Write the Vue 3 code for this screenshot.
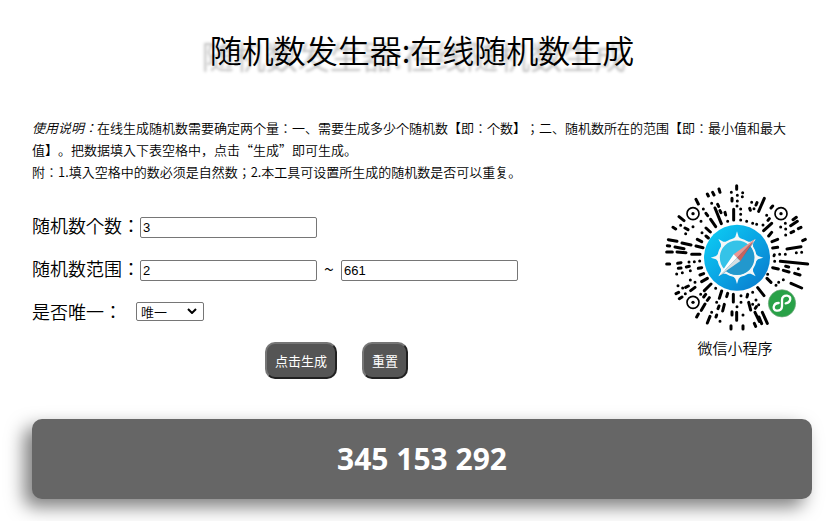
<script setup>
import { ref } from 'vue'

const defaults = { count: '3', min: '2', max: '661', unique: 'yes' }
const count = ref(defaults.count)
const min = ref(defaults.min)
const max = ref(defaults.max)
const unique = ref(defaults.unique)
const numbers = ref([345, 153, 292])

// Each entry is one quadrant of the code: x1, y1, x2, y2 for a dash, x, y for a dot.
const quadrants = [
  {
    x: 15, y: 15,
    marks: [
      [108, 58, 115, 72], [142, 42, 145, 48], [158, 37, 162, 45], [177, 27, 180, 37], [214, 37],
      [216, 55, 216, 63], [221, 88, 221, 120], [155, 70], [173, 73, 176, 79], [165, 84, 184, 131],
      [180, 92, 183, 98], [195, 97, 197, 105], [203, 124], [130, 87], [138, 100, 143, 107],
      [152, 118, 167, 140], [123, 124], [57, 110, 72, 122], [62, 136], [39, 142, 47, 147],
      [75, 144, 84, 149], [99, 140], [77, 161], [126, 158], [138, 144, 151, 156], [138, 168, 145, 174],
      [112, 178, 125, 185], [25, 179, 51, 184], [66, 189, 93, 195], [22, 197, 29, 198],
      [45, 201, 72, 206], [108, 198, 129, 203], [20, 216, 37, 216], [51, 216, 78, 218], [95, 223, 120, 223]
    ]
  },
  {
    x: 240, y: 15,
    marks: [
      [5, 17, 5, 28], [23, 38], [7, 46], [22, 50], [7, 63], [6, 78], [17, 87], [17, 103], [17, 120],
      [50, 67], [44, 85, 46, 91], [66, 68, 63, 75], [57, 86], [88, 55, 71, 94], [113, 78, 108, 84],
      [95, 106], [103, 116, 99, 121], [35, 124], [53, 130], [65, 133], [110, 130, 86, 152],
      [84, 135], [110, 157, 101, 168], [111, 185, 128, 178], [113, 204, 128, 202], [118, 224],
      [134, 223], [151, 223], [151, 130], [137, 141], [152, 147], [152, 165], [184, 112, 174, 119],
      [187, 124, 167, 137], [168, 158, 176, 154], [190, 146, 198, 142], [203, 182, 211, 178],
      [156, 207, 198, 200], [184, 218], [200, 217]
    ]
  },
  {
    x: 15, y: 240,
    marks: [
      [20, 27, 29, 27], [53, 25, 63, 23], [87, 21], [103, 20], [119, 18], [55, 40, 63, 39],
      [79, 36, 88, 34], [91, 47], [50, 57], [67, 53], [115, 40, 125, 38], [120, 60, 131, 56],
      [91, 75], [105, 82], [125, 80, 142, 70], [54, 92], [68, 99], [77, 97, 85, 93], [92, 107, 105, 97],
      [48, 116, 56, 112], [76, 116], [58, 131, 66, 126], [133, 107, 153, 87], [167, 100], [122, 118],
      [137, 118, 131, 126], [148, 128, 142, 136], [185, 108, 178, 130], [203, 115, 200, 125],
      [220, 118, 220, 141], [170, 142], [135, 147, 124, 166], [193, 148, 188, 168], [177, 153, 174, 161],
      [155, 172], [170, 180, 168, 186], [216, 170, 216, 180], [115, 177, 110, 186], [150, 184, 142, 204],
      [180, 199], [213, 212, 213, 222]
    ]
  },
  {
    x: 240, y: 240,
    marks: [
      [117, 2], [119, 19], [136, 19, 218, 27], [113, 38, 130, 42], [152, 34, 161, 36], [190, 41],
      [145, 46, 162, 51], [179, 55, 195, 60], [98, 58], [96, 70, 108, 82], [145, 74], [131, 82],
      [123, 91], [168, 85, 200, 99], [68, 98, 87, 122], [53, 112], [18, 122], [38, 118, 36, 126],
      [18, 142], [41, 142, 47, 165], [53, 148], [63, 135], [71, 149], [6, 155], [5, 172, 5, 196],
      [64, 155, 61, 160], [60, 172, 73, 199], [82, 172, 97, 205], [24, 180], [72, 186, 80, 206],
      [58, 205, 62, 214], [24, 212, 24, 222]
    ]
  }
]

const marksPath = quadrants
  .flatMap(q => q.marks.map(([x1, y1, x2 = x1, y2 = y1]) =>
    `M${q.x + x1} ${q.y + y1}L${q.x + x2} ${q.y + y2}`))
  .join('')

const rings = [[114, 116], [378, 116], [114, 382]]
const spikes = [0, 45, 90, 135, 180, 225, 270, 315]

function generate() {
  const low = Number(min.value)
  const high = Number(max.value)
  const total = Number(count.value)
  const onlyUnique = unique.value === 'yes'
  if (!(total > 0) || high < low || (onlyUnique && high - low + 1 < total)) return
  const result = []
  while (result.length < total) {
    const n = low + Math.floor(Math.random() * (high - low + 1))
    if (!onlyUnique || !result.includes(n)) result.push(n)
  }
  numbers.value = result
}

function reset() {
  count.value = defaults.count
  min.value = defaults.min
  max.value = defaults.max
  unique.value = defaults.unique
}
</script>

<template>
  <main class="page">
    <h1 class="title">随机数发生器:在线随机数生成</h1>

    <div class="intro">
      <p><em>使用说明：</em>在线生成随机数需要确定两个量：一、需要生成多少个随机数【即：个数】；二、随机数所在的范围【即：最小值和最大值】。把数据填入下表空格中，点击<span class="quoted" lang="zh-CN">“生成”</span>即可生成。</p>
      <p>附：1.填入空格中的数必须是自然数；2.本工具可设置所生成的随机数是否可以重复。</p>
    </div>

    <div class="tool">
      <form class="form" @submit.prevent="generate" @reset.prevent="reset">
        <div class="row">
          <label for="count">随机数个数：</label>
          <input id="count" v-model="count" class="field" type="text">
        </div>
        <div class="row">
          <label for="min">随机数范围：</label>
          <input id="min" v-model="min" class="field" type="text">
          <label class="tilde" for="max">~</label>
          <input id="max" v-model="max" class="field" type="text">
        </div>
        <div class="row">
          <label class="unique-label" for="unique">是否唯一：</label>
          <span class="select">
            <select id="unique" v-model="unique">
              <option value="yes">唯一</option>
              <option value="no">不唯一</option>
            </select>
            <svg class="chevron" viewBox="0 0 10 6"><path d="M1 1l4 4 4-4" /></svg>
          </span>
        </div>
        <div class="actions">
          <button type="submit">点击生成</button>
          <button type="reset">重置</button>
        </div>
      </form>

      <figure class="code">
        <svg class="code-image" viewBox="15 24 450 450">
          <defs>
            <linearGradient id="sky" x1="0" y1="0" x2="1" y2="1">
              <stop offset="0.15" stop-color="#0cc4f0" />
              <stop offset="0.5" stop-color="#0aa5e4" />
              <stop offset="0.85" stop-color="#0a84d2" />
            </linearGradient>
          </defs>
          <path class="dashes" :d="marksPath" />
          <g v-for="[x, y] in rings" :key="`${x}-${y}`">
            <circle class="ring" :cx="x" :cy="y" r="18" />
            <circle :cx="x" :cy="y" r="5" />
          </g>
          <circle cx="246" cy="248" r="99" fill="url(#sky)" />
          <g fill="#f4f7f8">
            <path v-for="angle in spikes" :key="angle" d="M246 169l5 16 10 10h-30l10-10z" :transform="`rotate(${angle} 246 248)`" />
          </g>
          <circle cx="246" cy="248" r="55" fill="#35c3e8" stroke="#f4f7f8" stroke-width="7" />
          <path d="M283 211A52 52 0 0 1 209 285z" fill="#2298cd" />
          <path d="M192 306l64-50 46-60-43 39z" fill="#176a98" opacity="0.6" />
          <path d="M300 192l-64 46 10 10z" fill="#ed9792" />
          <path d="M300 192l-44 66-10-10z" fill="#c9635f" />
          <path d="M191 304l45-66 10 10z" fill="#ffffff" />
          <path d="M191 304l65-46-10-10z" fill="#d5dfe2" />
          <circle cx="381" cy="385" r="41" fill="#28a147" stroke="#77a780" stroke-width="2" />
          <path d="M371 384c-16 0-21 20-6 23 10 1 16-5 16-13v-19c0-8 6-14 15-13 15 3 12 21-4 23" fill="none" stroke="#ffffff" stroke-width="7" stroke-linecap="round" />
        </svg>
        <figcaption>微信小程序</figcaption>
      </figure>
    </div>

    <output class="result">{{ numbers.join(' ') }}</output>
  </main>
</template>

<style>
body {
  margin: 0;
  background: #fff;
}
</style>

<style scoped>
.page {
  padding: 25px 24px 22px 32px;
  color: #000;
  font-family: "Noto Sans CJK JP", "Noto Sans CJK SC", sans-serif;
  font-weight: 350;
  text-spacing-trim: space-all;
}

.title {
  margin: 0;
  font-size: 32px;
  font-weight: 350;
  line-height: 48px;
  text-align: center;
  text-shadow: -8px 6px 3px rgba(0, 0, 0, 0.25);
}

.intro {
  padding: 44px 8px 0 0;
  font-size: 13px;
  line-height: 22px;
}

.intro p {
  margin: 0;
}

.quoted {
  font-family: "Noto Sans CJK SC", sans-serif;
}

.tool {
  display: grid;
  grid-template-columns: 1fr 171px;
}

.form {
  display: flex;
  flex-direction: column;
  padding-top: 30px;
}

.row {
  display: flex;
  align-items: flex-start;
  height: 24px;
  margin-bottom: 19px;
  font-size: 18px;
  line-height: 24px;
}

.field {
  box-sizing: border-box;
  width: 177px;
  height: 21px;
  margin: 4px 0 0;
  padding: 1px 2px;
  border: 1px solid #767676;
  border-radius: 2px;
  background: #fff;
  color: #000;
  font: 13px "Liberation Sans", sans-serif;
}

.tilde {
  width: 24px;
  text-align: center;
}

.unique-label {
  margin-right: 14px;
}

.select {
  position: relative;
  display: flex;
  margin-top: 3px;
}

.select select {
  appearance: none;
  box-sizing: border-box;
  width: 68px;
  height: 19px;
  padding: 0 4px;
  border: 1px solid #767676;
  border-radius: 2px;
  background: #fff;
  color: #000;
  font: 350 13px/17px "Noto Sans CJK SC", sans-serif;
}

.chevron {
  position: absolute;
  top: 6px;
  right: 7px;
  width: 10px;
  height: 6px;
  fill: none;
  stroke: #000;
  stroke-width: 2;
  pointer-events: none;
}

.actions {
  display: flex;
  justify-content: center;
  gap: 25px;
  padding-bottom: 40px;
}

.actions button {
  height: 37px;
  padding: 0 8px;
  border: 2px outset #767676;
  border-radius: 10px;
  background: #555;
  color: #fff;
  font: 13px "Noto Sans CJK SC", sans-serif;
}

.code {
  display: flex;
  flex-direction: column;
  align-items: center;
  margin: 0;
  padding-left: 17px;
}

.code-image {
  width: 150px;
  height: 150px;
}

.dashes {
  fill: none;
  stroke: #000;
  stroke-width: 9;
  stroke-linecap: round;
}

.ring {
  fill: none;
  stroke: #000;
  stroke-width: 5;
}

.code figcaption {
  margin-top: 4px;
  font-size: 15px;
  line-height: 22px;
}

.result {
  display: block;
  border-radius: 10px;
  background: #666;
  box-shadow: -8px 8px 18px rgba(0, 0, 0, 0.5);
  color: #fff;
  font: bold 30px/80px "Noto Sans", "Noto Sans CJK SC", sans-serif;
  text-align: center;
}
</style>
